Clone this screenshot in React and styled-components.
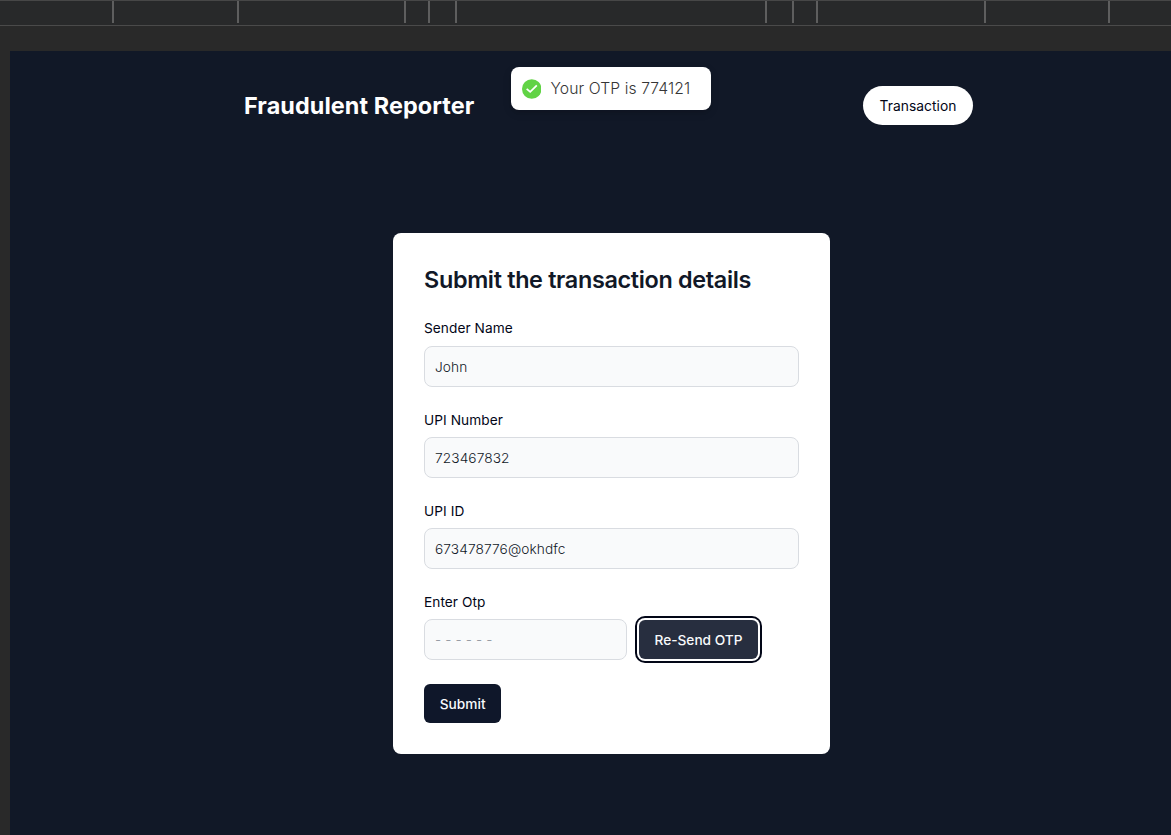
import React from 'react';
import styled, { createGlobalStyle } from 'styled-components';

const Global = createGlobalStyle`
  *, *::before, *::after { box-sizing: border-box; }
  body { margin: 0; background: #292929; font-family: Inter, "Liberation Sans", sans-serif; overflow: hidden; }
`;
const Page = styled.div`
  height: 835px;
  display: flex;
  flex-direction: column;
`;
const Ruler = styled.div`
  position: relative;
  height: 26px;
  flex: none;
  background: #28292a;
  border-top: 1px solid #474747;
  border-bottom: 1px solid #4a4a4a;
`;
const Tick = styled.span`
  position: absolute;
  top: 0;
  left: ${(p) => p.$x}px;
  width: 2px;
  height: 22px;
  background: #5e5e5e;
`;
const Viewport = styled.main`
  flex: 1;
  margin: 25px 0 0 10px;
  background: #111827;
  position: relative;
`;
const Header = styled.header`
  display: flex;
  justify-content: space-between;
  align-items: center;
  padding: 35px 198px 0 234px;
`;
const Brand = styled.h1`
  margin: 0;
  color: #fff;
  font-size: 23.4px;
  line-height: 32px;
  font-weight: 700;
  letter-spacing: 0.08px;
`;
const NavButton = styled.button`
  width: 110px;
  height: 39px;
  padding: 0;
  border: 0;
  border-radius: 20px;
  background: #fff;
  color: #020617;
  font: 400 13.8px/20px Inter, sans-serif;
  letter-spacing: 0.05px;
`;
const Toast = styled.div`
  position: absolute;
  left: 501.4px;
  top: 15.5px;
  width: 199.5px;
  height: 43.4px;
  padding: 1px 10.6px 0;
  display: flex;
  align-items: center;
  gap: 9px;
  border-radius: 8px;
  background: #fff;
  color: #363636;
  box-shadow: 0 3px 10px rgba(0, 0, 0, 0.1), 0 3px 3px rgba(0, 0, 0, 0.05);
  font-size: 15.7px;
  font-weight: 300;
  letter-spacing: 0.09px;
  white-space: nowrap;
`;
const Card = styled.form`
  width: 437px;
  height: 521px;
  margin: 108px 0 0 383px;
  padding: 31px;
  border-radius: 8px;
  background: #fff;
  color: #111827;
`;
const Title = styled.h2`
  margin: 0;
  font-size: 23.4px;
  line-height: 31px;
  font-weight: 600;
  letter-spacing: -0.33px;
`;
const Label = styled.label`
  display: block;
  margin-bottom: 7px;
  color: #020617;
  font-size: 13.7px;
  line-height: 20px;
  letter-spacing: 0.05px;
`;
const Field = styled.div`
  margin-top: 23px;
  ${Label} { margin-bottom: ${(p) => p.$first ? 8 : 7}px; }
`;
const Input = styled.input`
  display: block;
  width: ${(p) => p.$short ? 203 : 375}px;
  height: 41px;
  padding: 1px 10px 0;
  border: 1px solid #d9dce1;
  border-radius: 8px;
  background: #f9fafb;
  color: #111827;
  font: 300 13.7px Inter, sans-serif;
  letter-spacing: 0.1px;
  &::placeholder { color: #8d939d; opacity: 1; }
`;
const Row = styled.div`
  display: flex;
  align-items: center;
  gap: 12px;
`;
const Button = styled.button`
  display: block;
  width: ${(p) => p.$outlined ? 119 : 77}px;
  height: 39px;
  padding: 1px 0 0;
  border: 0;
  border-radius: 6px;
  background: ${(p) => p.$outlined ? '#272e3f' : '#0f172a'};
  box-shadow: ${(p) => p.$outlined ? '0 0 0 2px #fff, 0 0 0 4px #020617' : 'none'};
  color: #f8fafc;
  font: 500 13.7px Inter, sans-serif;
`;
const Submit = styled(Button)`
  width: 77.4px;
  margin-top: 24px;
`;

const ticks = [112, 237, 404, 428, 455, 765, 792, 816, 984, 1108];

export default function App() {
  return (
    <Page>
      <Global />
      <Ruler>{ticks.map((x) => <Tick key={x} $x={x} />)}</Ruler>
      <Viewport>
        <Header>
          <Brand>Fraudulent Reporter</Brand>
          <NavButton>Transaction</NavButton>
        </Header>
        <Toast>
          <svg width="19.5" height="20" viewBox="0 0 20 20">
            <circle cx="10" cy="10" r="10" fill="#61d345" />
            <path d="M4.8 9.8 8.4 13 15.2 6.4" fill="none" stroke="#fff" strokeWidth="1.8" />
          </svg>
          <span>Your OTP is 774121</span>
        </Toast>
        <Card>
          <Title>Submit the transaction details</Title>
          <Field $first><Label>Sender Name</Label><Input defaultValue="John" /></Field>
          <Field><Label>UPI Number</Label><Input defaultValue="723467832" /></Field>
          <Field><Label>UPI ID</Label><Input defaultValue="673478776@okhdfc" /></Field>
          <Field>
            <Label>Enter Otp</Label>
            <Row><Input $short placeholder="- - - - - -" /><Button type="button" $outlined>Re-Send OTP</Button></Row>
          </Field>
          <Submit type="button">Submit</Submit>
        </Card>
      </Viewport>
    </Page>
  );
}
